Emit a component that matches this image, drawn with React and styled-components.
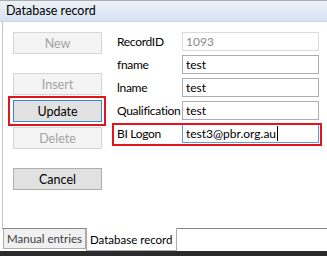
import React from "react";
import styled, {createGlobalStyle} from "styled-components";

const GlobalStyle = createGlobalStyle`
  body {
    margin: 0;
    background: #fff;
    font-family: Lato, "Noto Sans", sans-serif;
  }
`;

const buttons = [
    {label: "New", disabled: true, gap: 0},
    {label: "Insert", disabled: true, gap: 19},
    {label: "Update", focused: true, highlight: true, gap: 5},
    {label: "Delete", disabled: true, gap: 5},
    {label: "Cancel", gap: 19},
];

const fields = [
    {label: "RecordID", value: "1093", disabled: true},
    {label: "fname", value: "test"},
    {label: "lname", value: "test"},
    {label: "Qualification", value: "test"},
    {label: "BI Logon", value: "test3@pbr.org.au", focused: true, highlight: true},
];

export default function App() {
    return (
        <>
            <GlobalStyle/>
            <Window>
                <TitleBar>Database record</TitleBar>
                <Panel>
                    <Content>
                        <ButtonColumn>
                            {buttons.map(b => (
                                <Highlight key={b.label} $on={b.highlight} $gap={b.gap} $inset="-4px -4px -4px -5px">
                                    <Button $disabled={b.disabled} $focused={b.focused}>{b.label}</Button>
                                </Highlight>
                            ))}
                        </ButtonColumn>
                        <Fields>
                            {fields.map(f => (
                                <Highlight key={f.label} $on={f.highlight} $inset="-1px -3px -3px -5px">
                                    <Row>
                                        <Label>{f.label}</Label>
                                        <TextBox $disabled={f.disabled} $focused={f.focused}>
                                            {f.value}
                                            {f.focused && <Caret/>}
                                        </TextBox>
                                    </Row>
                                </Highlight>
                            ))}
                        </Fields>
                    </Content>
                </Panel>
                <TabStrip>
                    <Tab>Manual entries</Tab>
                    <Tab $active>Database record</Tab>
                </TabStrip>
                <Taskbar/>
            </Window>
        </>
    );
}

const Window = styled.div`
  width: 327px;
  height: 256px;
  display: flex;
  flex-direction: column;
  font-size: 12px;
  color: #000;
`;

const TitleBar = styled.div`
  box-sizing: border-box;
  height: 22px;
  padding-left: 6px;
  line-height: 20px;
  font-size: 12.5px;
  border-top: 1px solid #a9aeb4;
  border-bottom: 1px solid #c8d5e5;
  background: linear-gradient(#eef2f7, #d5e2f2);
`;

const Panel = styled.div`
  flex: 1;
  margin-left: 2px;
  border-left: 1px solid #c4c4c4;
  border-bottom: 1px solid #7f868e;
`;

const Content = styled.div`
  display: flex;
  padding: 10px 0 0 10px;
`;

const ButtonColumn = styled.div`
  width: 89px;
  display: flex;
  flex-direction: column;
`;

const Highlight = styled.div`
  position: relative;
  margin-top: ${props => props.$gap || 0}px;

  &::after {
    content: "";
    display: ${props => props.$on ? "block" : "none"};
    position: absolute;
    inset: ${props => props.$inset};
    border: 2px solid #e3141c;
    pointer-events: none;
  }
`;

const Button = styled.div`
  box-sizing: border-box;
  height: 22px;
  display: flex;
  align-items: center;
  justify-content: center;
  font-size: 12.5px;
  background: ${props => props.$disabled ? "#f4f4f4" : "#e1e1e1"};
  border: 1px solid ${props => props.$focused ? "#3d86c8" : props.$disabled ? "#d6d6d6" : "#adadad"};
  color: ${props => props.$disabled ? "#a3a3a3" : "#000"};
`;

const Fields = styled.div`
  margin-left: 15px;
  display: flex;
  flex-direction: column;
  gap: 4px;
`;

const Row = styled.div`
  display: flex;
  align-items: center;
  height: 19px;
`;

const Label = styled.div`
  width: 65px;
  white-space: nowrap;
  letter-spacing: -0.3px;
`;

const TextBox = styled.div`
  box-sizing: border-box;
  width: 137px;
  height: 19px;
  padding: 0 3px;
  display: flex;
  align-items: center;
  border: 1px solid ${props => props.$focused ? "#5a9fe3" : props.$disabled ? "#dadada" : "#abadb3"};
  color: ${props => props.$disabled ? "#8a8a8a" : "#000"};
`;

const Caret = styled.span`
  width: 1px;
  height: 15px;
  margin-left: 1px;
  background: #000;
`;

const TabStrip = styled.div`
  height: 22px;
  display: flex;
  align-items: flex-start;
  padding-left: 3px;
`;

const Tab = styled.div`
  box-sizing: border-box;
  height: ${props => props.$active ? 23 : 20}px;
  margin-top: ${props => props.$active ? -1 : 0}px;
  padding: 0 3px;
  display: flex;
  align-items: center;
  font-size: 11.5px;
  background: ${props => props.$active ? "#fff" : "#f0f0f0"};
  border: 1px solid #acacac;
  border-top: none;
  color: ${props => props.$active ? "#000" : "#3d3d3d"};
  white-space: nowrap;
`;

const Taskbar = styled.div`
  height: 5px;
  background: #2b2b2d;
`;
